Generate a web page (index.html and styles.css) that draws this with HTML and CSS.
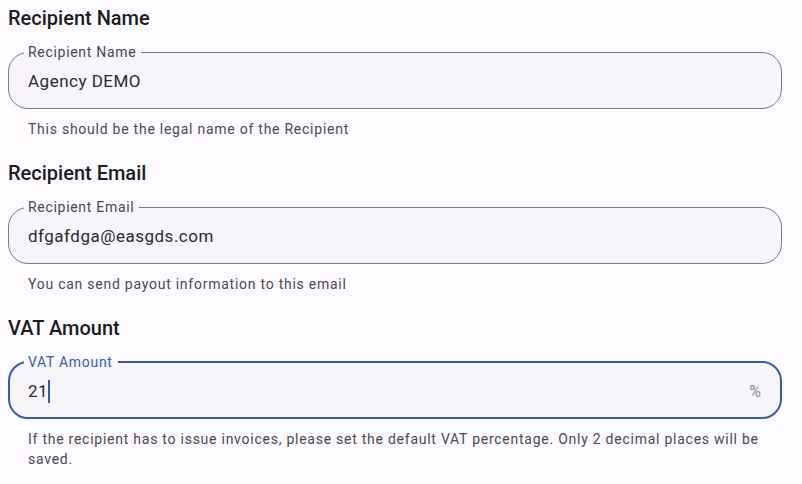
FILE: index.html
```html
<!DOCTYPE html>
<html lang="en">
<head>
<meta charset="utf-8">
<title>Recipient settings</title>
<link rel="stylesheet" href="styles.css">
</head>
<body>
<form class="form">
  <section class="section">
    <h2 class="heading">Recipient Name</h2>
    <fieldset class="field">
      <legend class="label">Recipient Name</legend>
      <div class="control"><span class="value">Agency DEMO</span></div>
    </fieldset>
    <p class="helper">This should be the legal name of the Recipient</p>
  </section>
  <section class="section">
    <h2 class="heading">Recipient Email</h2>
    <fieldset class="field">
      <legend class="label">Recipient Email</legend>
      <div class="control"><span class="value">dfgafdga@easgds.com</span></div>
    </fieldset>
    <p class="helper">You can send payout information to this email</p>
  </section>
  <section class="section">
    <h2 class="heading">VAT Amount</h2>
    <fieldset class="field field--focused">
      <legend class="label">VAT Amount</legend>
      <div class="control"><span class="value">21<span class="caret"></span></span><span class="suffix">%</span></div>
    </fieldset>
    <p class="helper">If the recipient has to issue invoices, please set the default VAT percentage. Only 2 decimal places will be saved.</p>
  </section>
</form>
</body>
</html>
```

FILE: styles.css
```css
* { box-sizing: border-box; }

html, body {
  margin: 0;
  padding: 0;
  background: #fdfbff;
}

body {
  font-family: Roboto, "Noto Sans", "Liberation Sans", sans-serif;
  color: #1b1b1f;
}

.form {
  padding: 6px 20px 0 8px;
  display: flex;
  flex-direction: column;
  gap: 22px;
}

.section {
  display: flex;
  flex-direction: column;
}

.heading {
  margin: 0;
  font-size: 20px;
  line-height: 24px;
  font-weight: 500;
  color: #1b1b1f;
}

.field {
  margin: 14px 0 0 0;
  padding: 0 20px 6px 15px;
  border: 1px solid #7b7980;
  border-radius: 20px;
  background: #f7f5fa;
  min-width: 0;
}

.label {
  padding: 0 5px 0 4px;
  font-size: 14px;
  line-height: 16px;
  letter-spacing: 0.7px;
  color: #47464f;
}

.control {
  height: 42px;
  display: flex;
  align-items: center;
  justify-content: space-between;
  padding-left: 4px;
}

.value {
  font-size: 17px;
  letter-spacing: 0.5px;
  color: #2a2a2f;
  display: inline-flex;
  align-items: center;
}

.caret {
  display: inline-block;
  width: 2px;
  height: 23px;
  margin-left: 0;
  background: #3b5ca3;
}

.suffix {
  font-size: 16px;
  color: #8c8a92;
}

.field--focused {
  border: 2px solid #3b5ca3;
  padding: 0 19px 5px 14px;
}

.field--focused .label {
  color: #3b5ca3;
}

.helper {
  margin: 10px 0 0 0;
  padding-left: 20px;
  font-size: 14px;
  line-height: 20px;
  letter-spacing: 0.75px;
  color: #4a4950;
}
```
